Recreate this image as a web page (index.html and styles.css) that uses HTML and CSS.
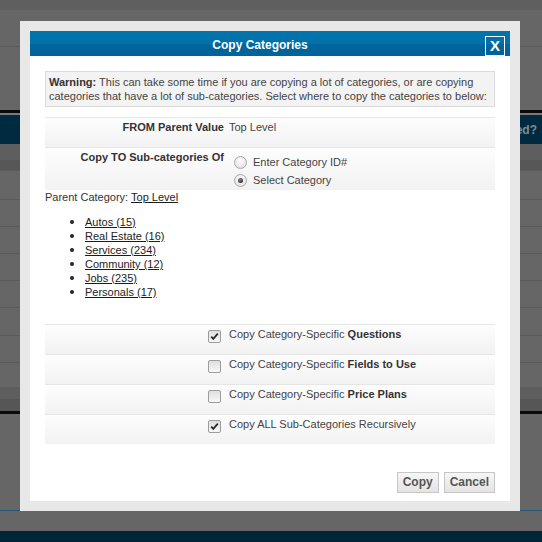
FILE: index.html
```html
<!DOCTYPE html>
<html>
<head>
<meta charset="utf-8">
<link rel="stylesheet" href="styles.css">
</head>
<body>
<div class="page">
  <div class="bg bg-top"></div>
  <div class="bg bg-a"></div>
  <div class="bg bg-b"></div>
  <div class="bg bg-black"></div>
  <div class="bg bg-gap"></div>
  <div class="bg bg-nav"><span class="nav-text">Advanced?</span></div>
  <div class="bg bg-sub"></div>
  <div class="bg bg-row h29"></div>
  <div class="bg bg-row h27"></div>
  <div class="bg bg-row h27"></div>
  <div class="bg bg-row h27"></div>
  <div class="bg bg-row h27"></div>
  <div class="bg bg-row h28"></div>
  <div class="bg bg-row h27"></div>
  <div class="bg bg-row h25"></div>
  <div class="bg bg-foot"></div>
  <div class="bg bg-black"></div>
  <div class="bg bg-c"></div>
  <div class="bg bg-blue"></div>
  <div class="bg bg-d"></div>
  <div class="bg bg-navy"></div>
</div>

<div class="modal">
  <div class="modal-head">
    <span class="title">Copy Categories</span>
    <span class="close">X</span>
  </div>
  <div class="modal-body">
    <div class="warn"><b>Warning:</b> This can take some time if you are copying a lot of categories, or are copying categories that have a lot of sub-categories. Select where to copy the categories to below:</div>

    <div class="row r1">
      <div class="lbl">FROM Parent Value</div>
      <div class="val">Top Level</div>
    </div>
    <div class="row r2">
      <div class="lbl">Copy TO Sub-categories Of</div>
      <div class="val radios">
        <div class="opt"><span class="radio"></span><span>Enter Category ID#</span></div>
        <div class="opt"><span class="radio on"></span><span>Select Category</span></div>
      </div>
    </div>

    <div class="parent">Parent Category: <a href="#">Top Level</a></div>
    <ul class="cats">
      <li><a href="#">Autos (15)</a></li>
      <li><a href="#">Real Estate (16)</a></li>
      <li><a href="#">Services (234)</a></li>
      <li><a href="#">Community (12)</a></li>
      <li><a href="#">Jobs (235)</a></li>
      <li><a href="#">Personals (17)</a></li>
    </ul>

    <div class="checks">
      <div class="row crow">
        <div class="lbl"><span class="cb on"><svg viewBox="0 0 11 11" width="11" height="11"><path d="M2.2 5.6 L4.3 7.9 L8.8 2.6" fill="none" stroke="#2a2a2a" stroke-width="1.8"/></svg></span></div>
        <div class="val">Copy Category-Specific <b>Questions</b></div>
      </div>
      <div class="row crow">
        <div class="lbl"><span class="cb"></span></div>
        <div class="val">Copy Category-Specific <b>Fields to Use</b></div>
      </div>
      <div class="row crow">
        <div class="lbl"><span class="cb"></span></div>
        <div class="val">Copy Category-Specific <b>Price Plans</b></div>
      </div>
      <div class="row crow">
        <div class="lbl"><span class="cb on"><svg viewBox="0 0 11 11" width="11" height="11"><path d="M2.2 5.6 L4.3 7.9 L8.8 2.6" fill="none" stroke="#2a2a2a" stroke-width="1.8"/></svg></span></div>
        <div class="val">Copy ALL Sub-Categories Recursively</div>
      </div>
    </div>

    <div class="actions">
      <button class="btn">Copy</button>
      <button class="btn">Cancel</button>
    </div>
  </div>
</div>
</body>
</html>
```

FILE: styles.css
```css
html, body {
  margin: 0;
  padding: 0;
}
body {
  width: 542px;
  height: 542px;
  overflow: hidden;
  position: relative;
  background: #666;
  font-family: "Liberation Sans", Arial, sans-serif;
}
.page {
  display: flex;
  flex-direction: column;
}
.bg { width: 100%; }
.bg-top { height: 10px; background: #5f5f5f; }
.bg-a { height: 36px; background: #666; border-bottom: 1px solid #5b5b5b; }
.bg-b { height: 63px; background: #666; }
.bg-black { height: 3px; background: #0a0a0a; }
.bg-gap { height: 2px; background: #7a7a7a; }
.bg-nav {
  height: 29px;
  background: #002a3f;
  display: flex;
  justify-content: flex-end;
  align-items: center;
}
.nav-text {
  font-weight: bold;
  font-size: 12px;
  color: #7d8a92;
  padding-right: 5px;
}
.bg-sub { height: 26px; background: linear-gradient(#5e5e5e 0%, #5e5e5e 60%, #575757 60%, #575757 100%); }
.bg-row { background: #666; border-top: 1px solid #5b5b5b; box-sizing: border-box; }
.h29 { height: 29px; }
.h28 { height: 28px; }
.h27 { height: 27px; }
.h25 { height: 25px; }
.bg-foot { height: 24px; background: linear-gradient(#5e5e5e 0%, #5e5e5e 50%, #565656 50%, #565656 100%); }
.bg-c { height: 96px; background: #666; }
.bg-blue { height: 1px; background: #1f5878; }
.bg-d { height: 20px; background: #666; }
.bg-navy { height: 11px; background: #00263a; }

.modal {
  position: absolute;
  left: 20px;
  top: 21px;
  width: 480px;
  height: 470px;
  border: 10px solid #e8e8e8;
  background: #fff;
  display: flex;
  flex-direction: column;
}
.modal-head {
  height: 25px;
  display: flex;
  align-items: flex-end;
  background: linear-gradient(#0274ad 0%, #0071a9 50%, #00669d 52%, #00639a 100%);
}
.title {
  flex: 1;
  align-self: stretch;
  text-align: center;
  color: #fff;
  font-weight: bold;
  font-size: 12px;
  line-height: 22px;
  padding-top: 3px;
  padding-left: 5px;
  box-sizing: border-box;
}
.close {
  width: 20px;
  height: 20px;
  box-sizing: border-box;
  border: 1px solid #fff;
  margin-right: 5px;
  color: #fff;
  font-weight: bold;
  font-size: 15px;
  line-height: 18px;
  text-align: center;
}
.modal-body {
  padding: 15px 15px 8px;
  font-size: 11px;
  line-height: 14px;
  color: #333;
  display: flex;
  flex-direction: column;
}
.warn {
  background: #f3f3f3;
  border: 1px solid #dadada;
  padding: 3px;
  color: #444;
  margin-bottom: 10px;
}
.warn b { color: #333; }
.row {
  display: flex;
  border-top: 1px solid #e6e6e6;
  background: linear-gradient(#fdfdfd, #f2f2f2);
}
.lbl {
  width: 180px;
  flex: none;
  box-sizing: border-box;
  text-align: right;
  padding-right: 1px;
  font-weight: bold;
  color: #333;
}
.val {
  padding-left: 4px;
  color: #444;
}
.r1 { padding: 2px 0 13px; }
.r2 { padding-top: 2px; padding-bottom: 1px; }
.r2 .val { padding-top: 3px; }
.radios { display: flex; flex-direction: column; }
.opt {
  height: 18px;
  display: flex;
  align-items: center;
}
.radio {
  width: 13px;
  height: 13px;
  box-sizing: border-box;
  border-radius: 50%;
  border: 1px solid #a8a8a8;
  background: radial-gradient(circle at 50% 35%, #fdfdfd 0%, #e6e6e6 70%, #d8d8d8 100%);
  margin: 0 6px 0 5px;
  display: flex;
  align-items: center;
  justify-content: center;
}
.radio.on::after {
  content: "";
  width: 5px;
  height: 5px;
  border-radius: 50%;
  background: radial-gradient(circle at 40% 35%, #888 0%, #333 70%);
}
.parent { color: #333; }
a { color: #1c1c1c; text-decoration: underline; }
.cats {
  margin: 11px 0 25px;
  padding-left: 40px;
}
.cats li::marker { font-size: 13px; color: #222; }
.crow { height: 30px; box-sizing: border-box; padding-top: 2px; }
.crow .lbl { padding-right: 4px; padding-top: 3px; }
.crow .val { color: #444; }
.crow .val b { color: #333; }
.cb {
  display: inline-flex;
  width: 13px;
  height: 13px;
  box-sizing: border-box;
  border: 1px solid #9c9c9c;
  border-radius: 2px;
  background: linear-gradient(#dedede, #f8f8f8);
  align-items: center;
  justify-content: center;
  vertical-align: top;
}
.cb svg { display: block; }
.actions {
  display: flex;
  justify-content: flex-end;
  gap: 5px;
  margin-top: 28px;
}
.btn {
  font-family: "Liberation Sans", Arial, sans-serif;
  font-size: 12px;
  font-weight: bold;
  color: #555;
  height: 21px;
  padding: 0 5px;
  line-height: 19px;
  border: 1px solid #c6c6c6;
  border-radius: 0;
  background: linear-gradient(#f6f6f6, #e4e4e4);
  margin: 0;
}
```
